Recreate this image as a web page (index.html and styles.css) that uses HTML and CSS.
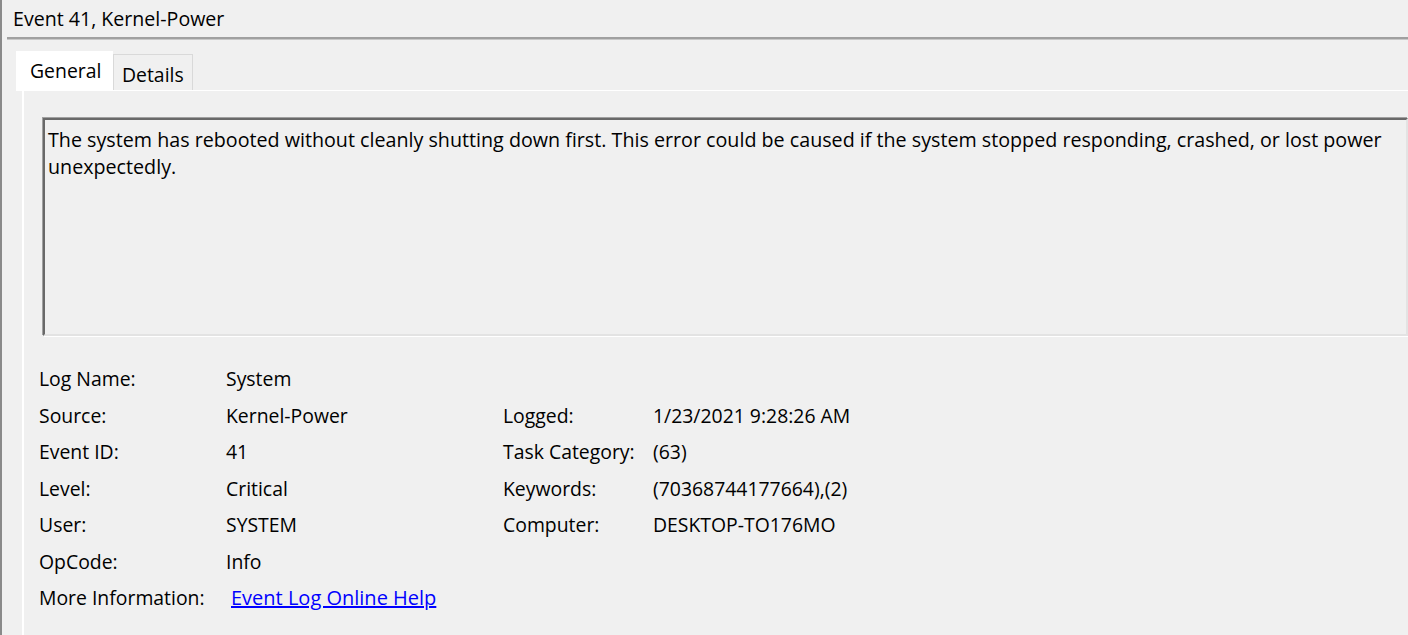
FILE: index.html
```html
<!DOCTYPE html>
<html>
<head>
<meta charset="utf-8">
<link rel="stylesheet" href="styles.css">
</head>
<body>
<div class="window">
  <div class="title">Event 41, Kernel-Power</div>
  <div class="rule"></div>
  <div class="tabs">
    <div class="tab active">General</div>
    <div class="tab">Details</div>
  </div>
  <div class="panel">
    <div class="desc">The system has rebooted without cleanly shutting down first. This error could be caused if the system stopped responding, crashed, or lost power unexpectedly.</div>
    <div class="fields">
      <div class="lbl">Log Name:</div><div class="val">System</div><div></div><div></div>
      <div class="lbl">Source:</div><div class="val">Kernel-Power</div><div class="lbl">Logged:</div><div class="val">1/23/2021 9:28:26 AM</div>
      <div class="lbl">Event ID:</div><div class="val">41</div><div class="lbl">Task Category:</div><div class="val">(63)</div>
      <div class="lbl">Level:</div><div class="val">Critical</div><div class="lbl">Keywords:</div><div class="val">(70368744177664),(2)</div>
      <div class="lbl">User:</div><div class="val">SYSTEM</div><div class="lbl">Computer:</div><div class="val">DESKTOP-TO176MO</div>
      <div class="lbl">OpCode:</div><div class="val">Info</div><div></div><div></div>
      <div class="lbl">More Information:</div><div class="val"><a class="link" href="#">Event Log Online Help</a></div><div></div><div></div>
    </div>
  </div>
</div>
</body>
</html>
```

FILE: styles.css
```css
html, body {
  margin: 0;
  padding: 0;
  background: #f0f0f0;
  height: 100%;
  overflow: hidden;
}
body {
  font-family: "Open Sans", "Noto Sans", sans-serif;
  color: #000;
}
.window {
  border-left: 2px solid #8a8a8a;
  height: 635px;
  box-sizing: border-box;
  display: flex;
  flex-direction: column;
  overflow: hidden;
}
.title {
  font-size: 19.6px;
  height: 37px;
  line-height: 37px;
  padding-left: 11px;
}
.rule {
  margin-left: 5px;
  height: 0;
  border-top: 2px solid #a0a0a0;
  border-bottom: 1px solid #c8c8c8;
}
.tabs {
  display: flex;
  align-items: flex-start;
  padding-left: 14px;
  margin-top: 11px;
  height: 39px;
}
.tab {
  font-size: 19.4px;
  box-sizing: border-box;
}
.tab.active {
  background: #fff;
  width: 97px;
  height: 40px;
  line-height: 40px;
  padding-left: 14px;
  position: relative;
  z-index: 1;
}
.tab:not(.active) {
  margin-top: 3px;
  width: 80px;
  height: 36px;
  line-height: 40px;
  padding-left: 8px;
  border: 1px solid #d9d9d9;
  border-bottom: none;
}
.panel {
  flex: 1;
  margin-left: 20px;
  border-top: 1px solid #fff;
  border-left: 2px solid #fff;
  padding-top: 27px;
  padding-left: 18px;
}
.desc {
  box-sizing: border-box;
  height: 218px;
  border-style: solid;
  border-width: 2px;
  border-color: #696969 #e3e3e3 #e3e3e3 #696969;
  box-shadow: -1px -1px 0 #a0a0a0, 1px 1px 0 #fff;
  padding: 6px 3px;
  font-size: 19.7px;
  line-height: 27px;
  margin-left: 1px;
}
.fields {
  display: grid;
  grid-template-columns: 187px 277px 150px auto;
  grid-auto-rows: 36.5px;
  margin-top: 25px;
  margin-left: -3px;
  font-size: 19.4px;
  line-height: 36.5px;
}
.link {
  margin-left: 5px;
  color: #0000ff;
  text-decoration: underline;
  font-size: 20px;
}
```
